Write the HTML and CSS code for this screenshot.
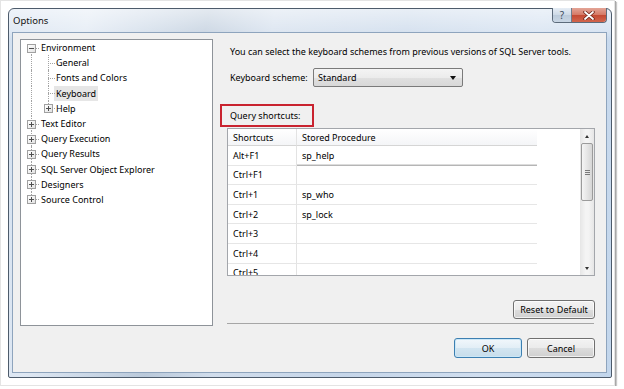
FILE: index.html
```html
<!DOCTYPE html>
<html lang="en">
<head>
  <meta charset="UTF-8" />
  <meta name="viewport" content="width=device-width, initial-scale=1" />
  <title>Options</title>
  <link rel="stylesheet" href="styles.css">
</head>
<body>
  <div class="frame">
    <div class="window">
      <div class="titlebar">
        <span class="title">Options</span>
        <div class="caption-buttons">
          <span class="cap-help">?</span>
          <span class="cap-close">
            <svg width="12" height="9" viewBox="0 0 12 9">
              <path d="M2 1 L10 8 M10 1 L2 8" stroke="#6b2418" stroke-width="3.4" stroke-linecap="round" fill="none"/>
              <path d="M2 1 L10 8 M10 1 L2 8" stroke="#ffffff" stroke-width="1.8" stroke-linecap="round" fill="none"/>
            </svg>
          </span>
        </div>
      </div>

      <div class="client">
        <div class="main">
          <div class="tree">
            <div class="node first"><span class="hline"></span><span class="expander open"></span><span class="label">Environment</span></div>
            <div class="node child"><span class="hline"></span><span class="label">General</span></div>
            <div class="node child"><span class="hline"></span><span class="label">Fonts and Colors</span></div>
            <div class="node child"><span class="hline"></span><span class="label selected">Keyboard</span></div>
            <div class="node child last-child"><span class="hline"></span><span class="expander"></span><span class="label">Help</span></div>
            <div class="node"><span class="hline"></span><span class="expander"></span><span class="label">Text Editor</span></div>
            <div class="node"><span class="hline"></span><span class="expander"></span><span class="label">Query Execution</span></div>
            <div class="node"><span class="hline"></span><span class="expander"></span><span class="label">Query Results</span></div>
            <div class="node"><span class="hline"></span><span class="expander"></span><span class="label">SQL Server Object Explorer</span></div>
            <div class="node"><span class="hline"></span><span class="expander"></span><span class="label">Designers</span></div>
            <div class="node last"><span class="hline"></span><span class="expander"></span><span class="label">Source Control</span></div>
          </div>

          <div class="page">
            <p class="desc">You can select the keyboard schemes from previous versions of SQL Server tools.</p>

            <div class="scheme">
              <label>Keyboard scheme:</label>
              <div class="combo"><span>Standard</span><span class="arrow"></span></div>
            </div>

            <div class="query-label">Query shortcuts:</div>

            <div class="grid">
              <div class="grid-body">
                <div class="grid-row grid-head"><div class="cell">Shortcuts</div><div class="cell">Stored Procedure</div></div>
                <div class="grid-row"><div class="cell">Alt+F1</div><div class="cell editing">sp_help</div></div>
                <div class="grid-row"><div class="cell">Ctrl+F1</div><div class="cell"></div></div>
                <div class="grid-row"><div class="cell">Ctrl+1</div><div class="cell">sp_who</div></div>
                <div class="grid-row"><div class="cell">Ctrl+2</div><div class="cell">sp_lock</div></div>
                <div class="grid-row"><div class="cell">Ctrl+3</div><div class="cell"></div></div>
                <div class="grid-row"><div class="cell">Ctrl+4</div><div class="cell"></div></div>
                <div class="grid-row"><div class="cell">Ctrl+5</div><div class="cell"></div></div>
              </div>
              <div class="scrollbar">
                <div class="sb-btn"><span class="tri up"></span></div>
                <div class="sb-thumb"><span class="grip"></span></div>
                <div class="sb-track"></div>
                <div class="sb-btn"><span class="tri down"></span></div>
              </div>
            </div>

            <div class="reset-row">
              <button class="btn reset">Reset to Default</button>
            </div>

            <div class="separator"></div>
          </div>
        </div>

        <div class="footer">
          <button class="btn default">OK</button>
          <button class="btn">Cancel</button>
        </div>
      </div>
    </div>
  </div>
</body>
</html>
```

FILE: styles.css
```css
* {
  box-sizing: border-box;
}

body {
  margin: 0;
  background: #ffffff;
  font-family: "Noto Sans", "Open Sans", sans-serif;
  font-size: 9px;
  color: #000000;
}

/* white photo frame around the screenshot */
.frame {
  width: 615px;
  height: 386px;
  padding: 7px 2px 7px 7px;
  border: 1px solid #e4e4e4;
  background: #ffffff;
  box-shadow: 1px 1px 0 #a8a8a8, 2px 2px 1px #c8c8c8;
}

.window {
  width: 604px;
  height: 370px;
  border: 1px solid #4d5b6b;
  border-radius: 6px 6px 2px 2px;
  padding: 0 4px 4px 3px;
  display: flex;
  flex-direction: column;
  background:
    linear-gradient(to bottom, rgba(255, 255, 255, 0.6) 0, rgba(255, 255, 255, 0.3) 22px, rgba(255, 255, 255, 0) 30px),
    linear-gradient(100deg, #d3e0ef 0%, #dfe8f3 12%, #cad7e6 22%, #bac9da 30%, #d1ddec 40%, #c6d6e9 60%, #d0deef 80%, #c2d6ec 100%);
}

.titlebar {
  height: 23px;
  display: flex;
  align-items: center;
  padding-left: 1px;
}

.title {
  font-size: 9.5px;
  color: #111;
}

.caption-buttons {
  margin-left: auto;
  align-self: flex-start;
  margin-top: -1px;
  display: flex;
  height: 15px;
  border: 1px solid #5c6b7b;
  border-top: none;
  border-radius: 0 0 4px 4px;
  overflow: hidden;
}

.cap-help {
  width: 19px;
  display: flex;
  align-items: center;
  justify-content: center;
  font-size: 10px;
  color: #3c4a5a;
  background: linear-gradient(#e6edf5, #cdd9e6 50%, #bccbdb 51%, #c9d6e4);
  border-right: 1px solid #6f7d8c;
}

.cap-close {
  width: 34px;
  display: flex;
  align-items: center;
  justify-content: center;
  background: linear-gradient(#e3a597, #d67a66 48%, #c44a33 52%, #d2664d);
}

.client {
  height: 341px;
  border: 1px solid #8ea4bd;
  background: #f0f0f0;
  padding: 6px 11px 0 7px;
  display: flex;
  flex-direction: column;
}

.main {
  display: flex;
  height: 287px;
}

/* tree view */
.tree {
  width: 193px;
  height: 287px;
  border: 1px solid #8e9399;
  background: #ffffff;
}

.node {
  position: relative;
  height: 15.2px;
  display: flex;
  align-items: center;
  padding-left: 20px;
  white-space: nowrap;
}

.node.child {
  padding-left: 35px;
}

.node::before {
  content: "";
  position: absolute;
  left: 10px;
  top: 0;
  bottom: 0;
  border-left: 1px dotted #a3a3a3;
}

.node.first::before {
  top: 50%;
}

.node.last::before {
  bottom: 50%;
}

.node.child::after {
  content: "";
  position: absolute;
  left: 27px;
  top: 0;
  bottom: 0;
  border-left: 1px dotted #a3a3a3;
}

.node.last-child::after {
  bottom: 50%;
}

.hline {
  position: absolute;
  left: 10px;
  width: 8px;
  top: 50%;
  border-top: 1px dotted #a3a3a3;
}

.child .hline {
  left: 27px;
  width: 7px;
}

.expander {
  position: absolute;
  z-index: 1;
  left: 6px;
  top: 50%;
  margin-top: -4px;
  width: 9px;
  height: 9px;
  border: 1px solid #a0a0a0;
  background: linear-gradient(135deg, #ffffff, #e2e2e2);
}

.child .expander {
  left: 23px;
}

.expander::before {
  content: "";
  position: absolute;
  left: 1px;
  right: 1px;
  top: 3px;
  height: 1px;
  background: #505050;
}

.expander:not(.open)::after {
  content: "";
  position: absolute;
  left: 3px;
  top: 1px;
  bottom: 1px;
  width: 1px;
  background: #505050;
}

.label {
  padding: 1px 2px;
  margin-left: -2px;
}

.label.selected {
  background: #e6e6e6;
}

/* right page */
.page {
  width: 375px;
  margin-left: 7px;
  display: flex;
  flex-direction: column;
}

.desc {
  margin: 6px 0 0;
  padding-left: 10px;
  line-height: 14px;
}

.scheme {
  margin-top: 9px;
  display: flex;
  align-items: center;
}

.scheme label {
  width: 93px;
  padding-left: 10px;
}

.combo {
  width: 150px;
  height: 19px;
  border: 1px solid #7a7a7a;
  border-radius: 2px;
  background: linear-gradient(#f4f4f4, #ececec 50%, #e0e0e0 51%, #d8d8d8);
  display: flex;
  align-items: center;
  padding: 0 6px 0 4px;
}

.combo .arrow {
  margin-left: auto;
  width: 0;
  height: 0;
  border-left: 3.5px solid transparent;
  border-right: 3.5px solid transparent;
  border-top: 4px solid #111;
}

.query-label {
  margin-top: 17px;
  width: 94px;
  height: 23px;
  border: 2px solid #c9232f;
  padding-left: 8px;
  display: flex;
  align-items: center;
}

.grid {
  margin: 1px 0 0 7px;
  width: 368px;
  height: 148px;
  border: 1px solid #a3a6ab;
  background: #ffffff;
  display: flex;
}

.grid-body {
  flex: 1;
  overflow: hidden;
}

.grid-row {
  display: grid;
  grid-template-columns: 69px 240px;
  height: 19.6px;
}

.grid-row .cell {
  border-bottom: 1px solid #e6e6e6;
  padding-left: 5px;
  display: flex;
  align-items: center;
}

.grid-row .cell:first-child {
  border-right: 1px solid #e3e3e3;
}

.grid-head {
  height: 17px;
}

.grid-head .cell {
  background: linear-gradient(#ffffff, #f4f5f7);
  border-bottom: 1px solid #d5d5d5;
}

.grid-row .cell.editing {
  border-bottom: 1px solid #b5b5b5;
  box-shadow: inset 0 -1px 0 #dcdcdc;
}

.scrollbar {
  width: 14px;
  display: flex;
  flex-direction: column;
  background: linear-gradient(90deg, #e6e6e6, #f4f4f4 40%, #f4f4f4 60%, #e6e6e6);
}

.sb-btn {
  height: 14px;
  display: flex;
  align-items: center;
  justify-content: center;
}

.tri {
  width: 0;
  height: 0;
  border-left: 2.5px solid transparent;
  border-right: 2.5px solid transparent;
}

.tri.up {
  border-bottom: 3px solid #333;
}

.tri.down {
  border-top: 3px solid #333;
}

.sb-thumb {
  height: 58px;
  margin: 0 1px;
  border: 1px solid #9b9b9b;
  border-radius: 2px;
  background: linear-gradient(90deg, #f5f5f5, #e6e6e6 50%, #d6d6d6);
  display: flex;
  align-items: center;
  justify-content: center;
}

.grip {
  width: 5px;
  height: 5px;
  border-top: 1px solid #7a7a7a;
  border-bottom: 1px solid #7a7a7a;
  background: linear-gradient(#7a7a7a, #7a7a7a) center / 5px 1px no-repeat;
}

.sb-track {
  flex: 1;
}

.reset-row {
  margin-top: 24px;
  display: flex;
  justify-content: flex-end;
}

.btn {
  font-family: inherit;
  font-size: 9px;
  color: #000000;
  height: 20px;
  padding: 0;
  border: 1px solid #707070;
  border-radius: 3px;
  background: linear-gradient(#f3f3f3, #ebebeb 50%, #dddddd 51%, #d0d0d0);
  box-shadow: inset 0 0 0 1px rgba(255, 255, 255, 0.7);
}

.btn.reset {
  width: 82px;
  height: 19px;
}

.separator {
  margin: auto 1px 2px 7px;
  height: 1px;
  background: #a6a6a6;
}

.footer {
  margin-top: 12px;
  display: flex;
  justify-content: flex-end;
  gap: 5px;
}

.footer .btn {
  width: 68px;
}

.btn.default {
  border-color: #3c7fb1;
  background: linear-gradient(#f1f7fb, #e2eef6 50%, #d2e5f1 51%, #c7ddeb);
  box-shadow: inset 0 0 0 1px #cbe7f7;
}
```
